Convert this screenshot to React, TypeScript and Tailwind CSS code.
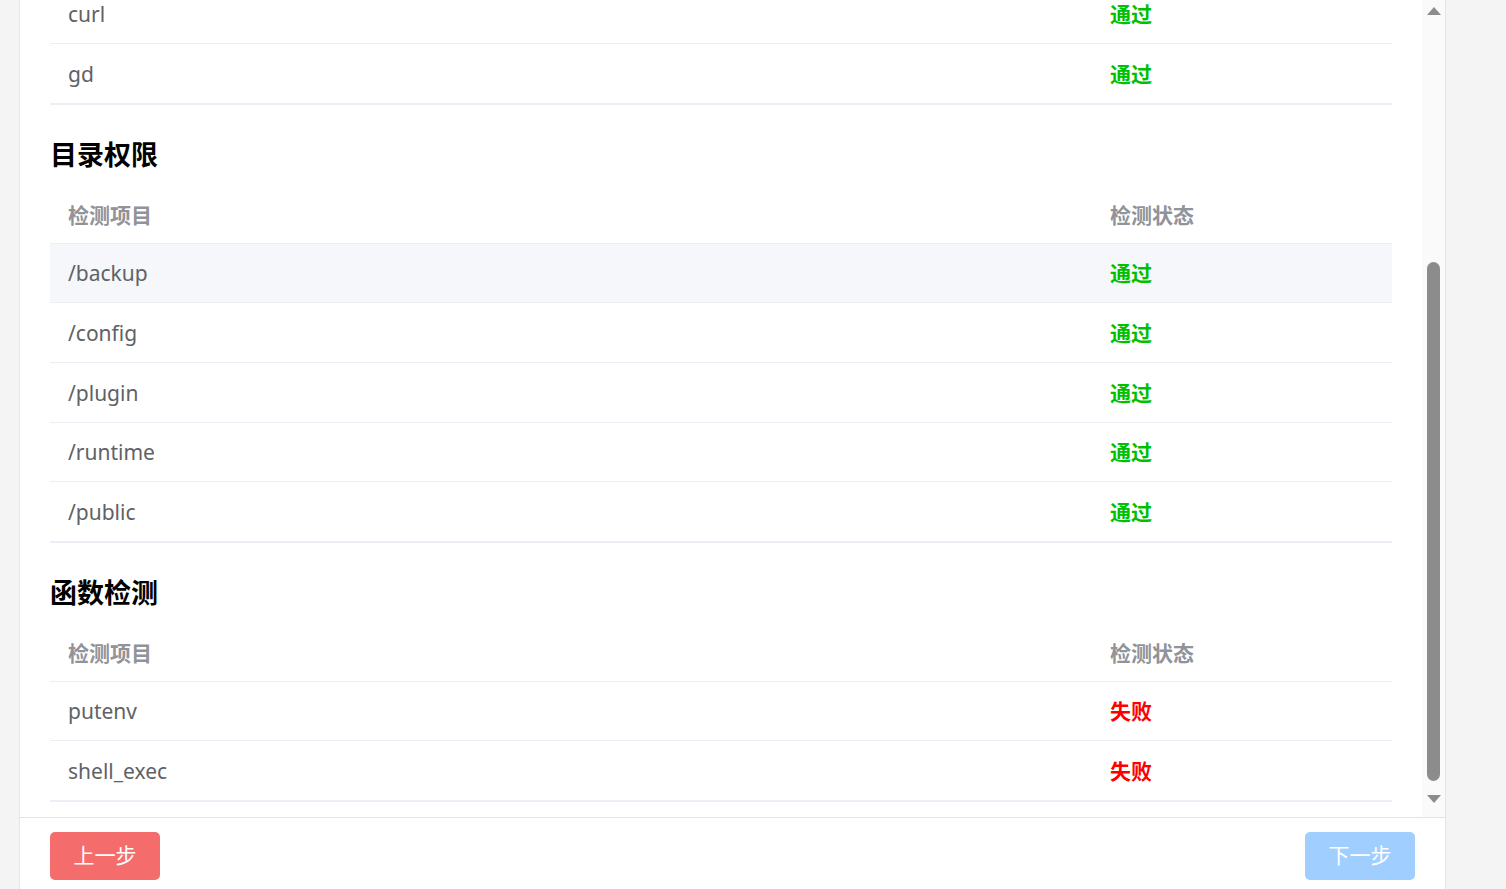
import React from 'react';

type Row = { name: string; ok: boolean; hover?: boolean };

const dirs: Row[] = [
  { name: '/backup', ok: true, hover: true },
  { name: '/config', ok: true },
  { name: '/plugin', ok: true },
  { name: '/runtime', ok: true },
  { name: '/public', ok: true },
];

const funcs: Row[] = [
  { name: 'putenv', ok: false },
  { name: 'shell_exec', ok: false },
];

const Status: React.FC<{ ok: boolean }> = ({ ok }) =>
  ok ? <span className="font-bold text-[#00c000]">通过</span> : <span className="font-bold text-[#ff0000]">失败</span>;

const BodyRow: React.FC<{ row: Row }> = ({ row }) => (
  <div className={`flex h-[59.6px] items-center border-b border-[#ebeef5] pt-[2px] ${row.hover ? 'bg-[#f5f7fa]' : 'bg-white'}`}>
    <div className="flex-1 pl-[18px] text-[#606266]">{row.name}</div>
    <div className="w-[300px] pl-[18px]">
      <Status ok={row.ok} />
    </div>
  </div>
);

const Table: React.FC<{ rows: Row[]; head?: boolean }> = ({ rows, head = true }) => (
  <div className="border-b border-[#ebeef5]">
    {head && (
      <div className="flex h-[58px] items-center border-b border-[#ebeef5] pt-[2px] font-bold text-[#909399]">
        <div className="flex-1 pl-[18px]">检测项目</div>
        <div className="w-[300px] pl-[18px]">检测状态</div>
      </div>
    )}
    {rows.map((r) => (
      <BodyRow key={r.name} row={r} />
    ))}
  </div>
);

const Section: React.FC<{ title: string; rows: Row[] }> = ({ title, rows }) => (
  <div>
    <h2 className="mt-[30px] mb-[12px] text-[27px] leading-[39px] font-bold text-black">{title}</h2>
    <Table rows={rows} />
  </div>
);

const Scrollbar: React.FC = () => (
  <div className="flex w-[23px] shrink-0 flex-col bg-[#fafafa]">
    <div className="flex h-[23px] items-start justify-center pt-[7px]">
      <div className="h-0 w-0 border-x-[7px] border-b-[8px] border-x-transparent border-b-[#8c8c8c]" />
    </div>
    <div className="flex flex-1 flex-col pt-[239px]">
      <div className="ml-[5px] h-[519px] w-[13px] rounded-full bg-[#8c8c8c]" />
    </div>
    <div className="flex h-[23px] items-start justify-center pt-[1px]">
      <div className="h-0 w-0 border-x-[7px] border-t-[8px] border-x-transparent border-t-[#8c8c8c]" />
    </div>
  </div>
);

export default function App() {
  return (
    <div
      className="flex h-[889px] w-full overflow-hidden bg-[#f4f4f4] text-[21px]"
      style={{ fontFamily: '"Noto Sans", "Noto Sans CJK SC", sans-serif' }}
    >
      <div className="w-[20px] shrink-0 border-r border-[#e4e4e4]" />
      <div className="flex w-[1426px] shrink-0 flex-col border-r border-[#e4e4e4] bg-white">
        <div className="flex h-[817px] shrink-0 overflow-hidden">
          <div className="flex-1 overflow-hidden px-[30px]">
            <div className="-mt-[15.3px]">
              <Table rows={[{ name: 'curl', ok: true }, { name: 'gd', ok: true }]} head={false} />
              <Section title="目录权限" rows={dirs} />
              <Section title="函数检测" rows={funcs} />
            </div>
          </div>
          <Scrollbar />
        </div>
        <div className="flex flex-1 items-start justify-between border-t border-[#e4e4e4] px-[30px] pt-[14px]">
          <button className="h-[48px] w-[110px] rounded-[5px] bg-[#f56c6c] text-[21px] text-white">上一步</button>
          <button className="h-[48px] w-[110px] rounded-[5px] bg-[#a0cfff] text-[21px] text-white">下一步</button>
        </div>
      </div>
    </div>
  );
}
